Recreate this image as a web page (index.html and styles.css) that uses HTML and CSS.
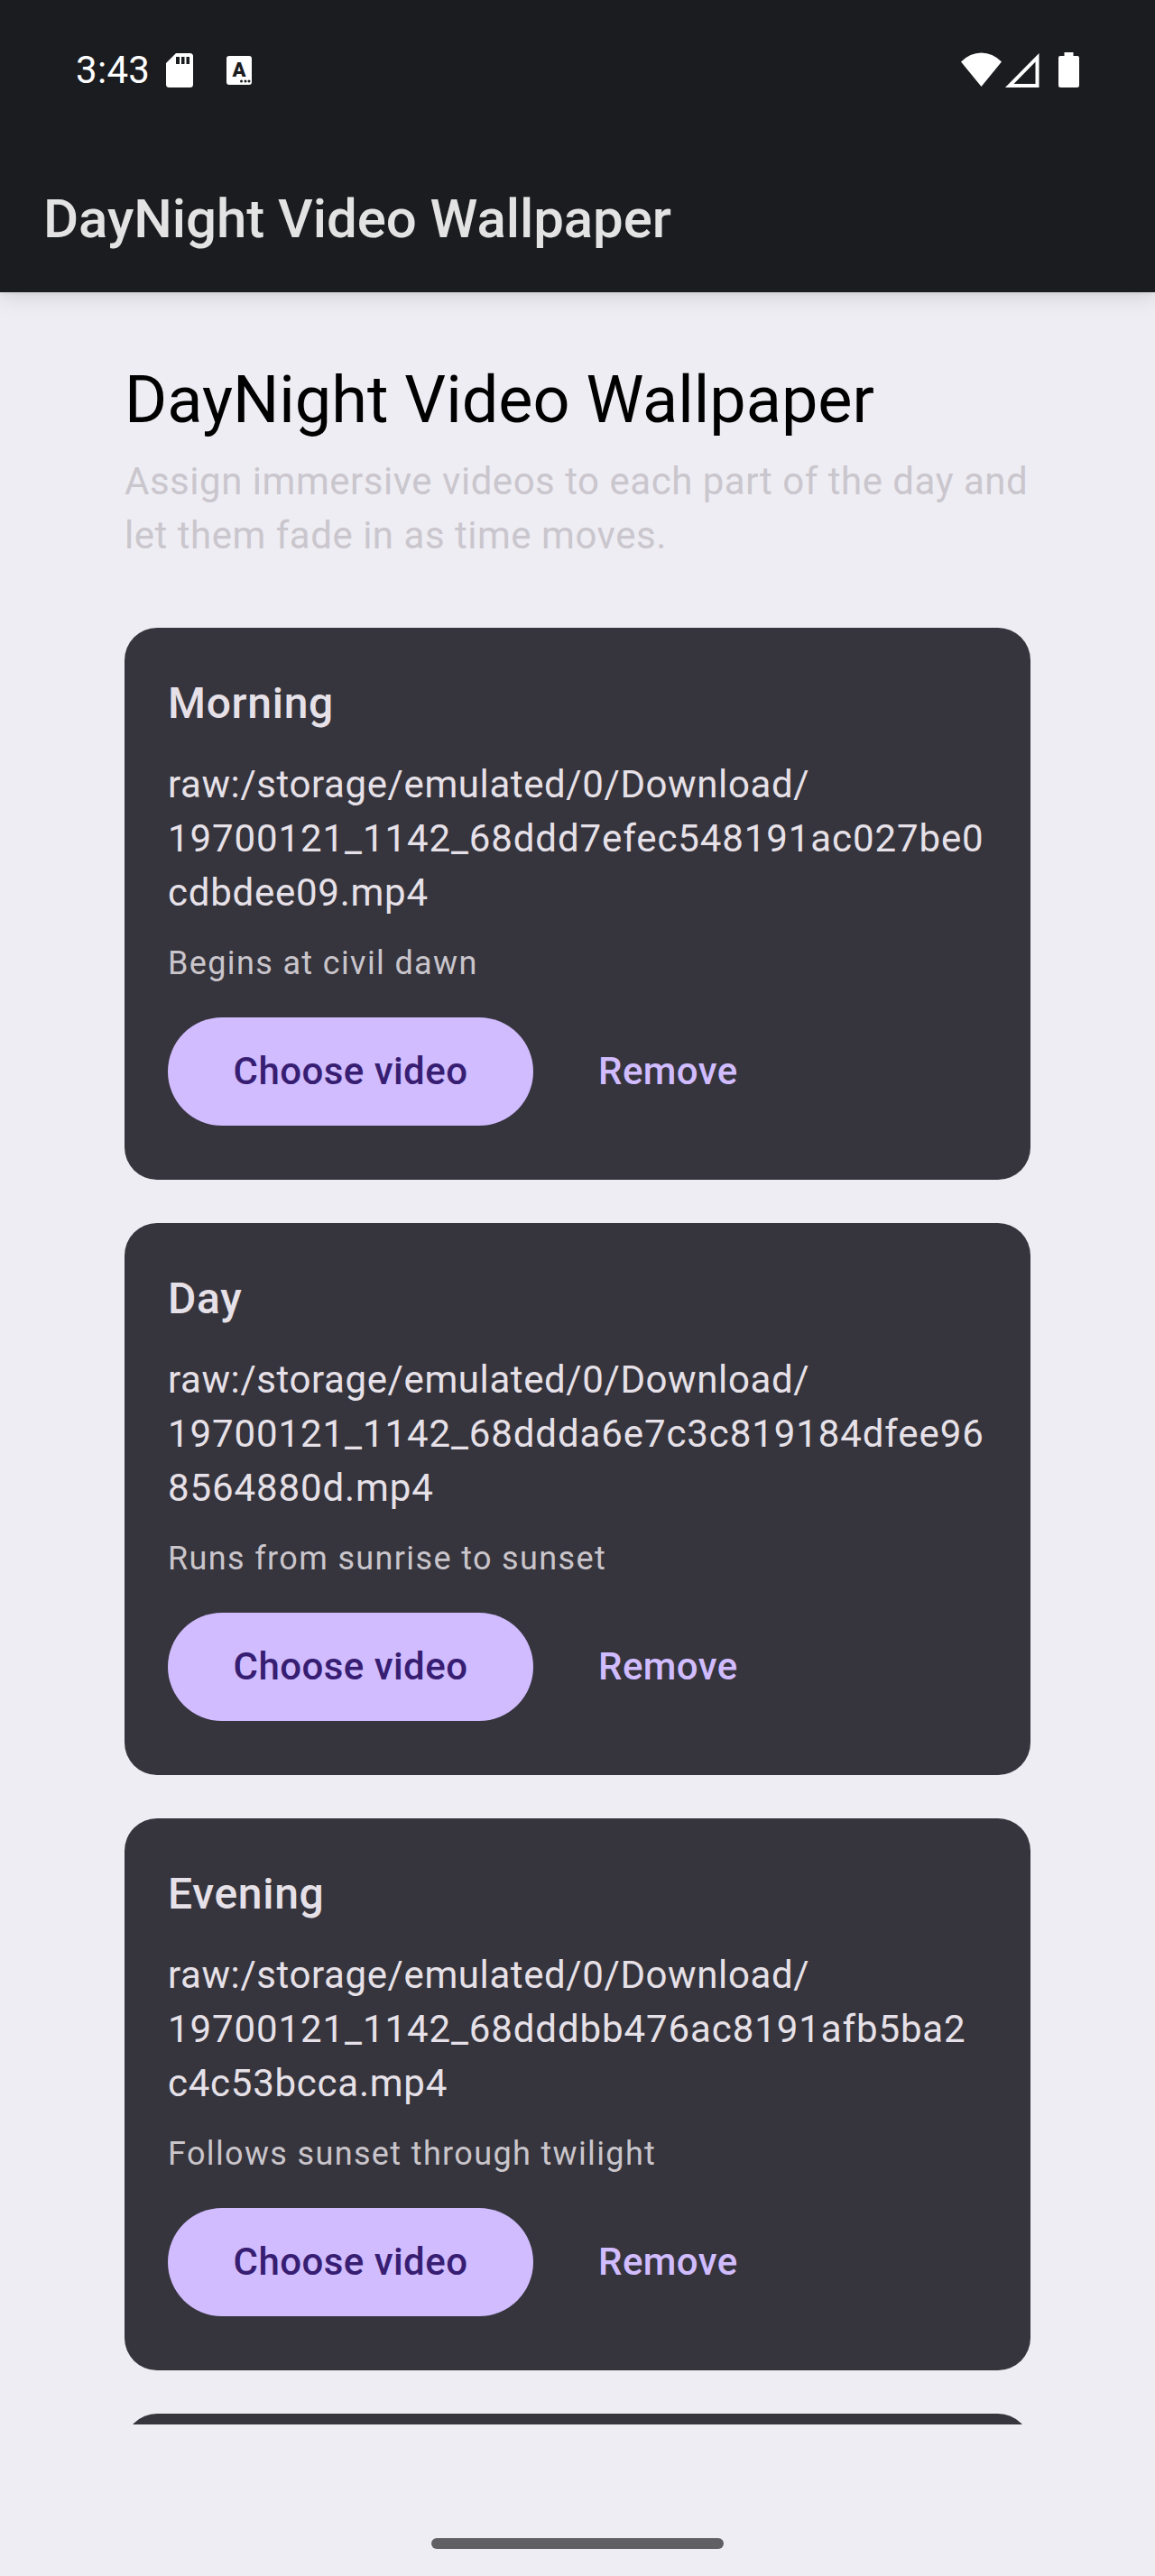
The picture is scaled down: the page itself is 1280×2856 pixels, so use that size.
FILE: index.html
```html
<!DOCTYPE html>
<html lang="en">
<head>
<meta charset="utf-8">
<title>DayNight Video Wallpaper</title>
<link rel="stylesheet" href="styles.css">
</head>
<body>
<div class="screen">
  <header class="top">
    <div class="status">
      <div class="status-left">
        <span class="clock">3:43</span>
        <svg class="sd" width="30" height="40" viewBox="0 0 30 40"><path fill="#fff" d="M11 1H26.500Q30 1 30 4.500V35.500Q30 39 26.500 39H3.500Q0 39 0 35.500V12Z"/><path fill="#1b1c1f" d="M11 5h4v8h-4zM17 5h3.500v8H17zM22.500 5H26v8h-3.500z"/></svg>
        <svg width="28" height="40" viewBox="0 0 28 40"><rect y="4" width="28" height="32" rx="3" fill="#fff"/><text class="glyph" x="14" y="27" text-anchor="middle">A</text><g fill="#1b1c1f"><circle cx="16.500" cy="32" r="1.500"/><circle cx="21" cy="32" r="1.500"/><circle cx="25" cy="32" r="1.500"/></g></svg>
      </div>
      <div class="status-right">
        <svg width="45" height="40" viewBox="0 0 45 40"><path fill="#fff" d="M0 10.500Q10 .5 22.500 .5T45 10.500L22.500 38Z"/></svg>
        <svg class="signal" width="38" height="40" viewBox="0 0 38 40"><path fill="#fff" fill-rule="evenodd" d="M37.500 1V39H0ZM33.500 10.500L9.500 35H33.500Z"/></svg>
        <svg class="battery" width="23" height="40" viewBox="0 0 23 40"><path fill="#fff" d="M6.500 0H16.500V4H21Q23 4 23 6V36.500Q23 39 20.500 39H2.500Q0 39 0 36.500V6Q0 4 2 4H6.500Z"/></svg>
      </div>
    </div>
    <div class="app-title">DayNight Video Wallpaper</div>
  </header>
  <main class="content">
    <h1 class="headline">DayNight Video Wallpaper</h1>
    <p class="intro">Assign immersive videos to each part of the day and<br>let them fade in as time moves.</p>
    <section class="card">
      <h2 class="card-title">Morning</h2>
      <p class="path"><span class="folder">raw:/storage/emulated/0/Download/</span><br><span class="file">19700121_1142_68ddd7efec548191ac027be0</span><br>cdbdee09.mp4</p>
      <p class="note">Begins at civil dawn</p>
      <div class="actions"><button class="choose">Choose video</button><button class="remove">Remove</button></div>
    </section>
    <section class="card">
      <h2 class="card-title">Day</h2>
      <p class="path"><span class="folder">raw:/storage/emulated/0/Download/</span><br><span class="file">19700121_1142_68ddda6e7c3c819184dfee96<br>8564880d.mp4</span></p>
      <p class="note">Runs from sunrise to sunset</p>
      <div class="actions"><button class="choose">Choose video</button><button class="remove">Remove</button></div>
    </section>
    <section class="card">
      <h2 class="card-title">Evening</h2>
      <p class="path"><span class="folder">raw:/storage/emulated/0/Download/</span><br><span class="file">19700121_1142_68dddbb476ac8191afb5ba2</span><br>c4c53bcca.mp4</p>
      <p class="note">Follows sunset through twilight</p>
      <div class="actions"><button class="choose">Choose video</button><button class="remove">Remove</button></div>
    </section>
    <section class="card"></section>
  </main>
  <footer class="nav"><div class="handle"></div></footer>
</div>
</body>
</html>
```
FILE: styles.css
```css
* { box-sizing: border-box; margin: 0; padding: 0; }
body { background: #eeedf3; font-family: Roboto, "Liberation Sans", sans-serif; }
.screen { width: 1280px; height: 2856px; display: flex; flex-direction: column; overflow: hidden; }

.top { flex: none; height: 324px; background: #1b1c1f; box-shadow: 0 2px 24px rgba(0, 0, 0, .15), 0 1px 4px rgba(0, 0, 0, .08); z-index: 1; }
.status { height: 156px; padding: 0 84px; display: flex; justify-content: space-between; align-items: center; }
.status-left, .status-right { display: flex; align-items: center; }
.status svg { display: block; flex: none; }
.clock { width: 82px; font-size: 42px; line-height: 60px; letter-spacing: .3px; color: #fff; white-space: nowrap; }
.sd { margin: 0 37px 0 18px; }
.signal { margin: 0 21px 0 4px; }
.glyph { font: 900 22px Roboto, sans-serif; fill: #1b1c1f; }
.app-title { height: 168px; padding-left: 48px; font-size: 60px; line-height: 174px; font-weight: 500; letter-spacing: -.06px; color: #e3e3e3; }

.content { flex: none; height: 2364px; padding: 72px 138px 0; overflow: hidden; }
.headline { font-size: 72px; line-height: 96px; font-weight: 400; color: #000; }
.intro { margin: 12px 0 72px; font-size: 42px; line-height: 60px; letter-spacing: .52px; color: #cac6cd; white-space: nowrap; }

.card { height: 612px; margin-bottom: 48px; padding: 48px; border-radius: 36px; background: #36343c; }
.card-title { font-size: 48px; line-height: 72px; font-weight: 500; letter-spacing: .7px; color: #e6e1e8; }
.path { margin-top: 24px; font-size: 42px; line-height: 60px; letter-spacing: .75px; color: #e6e1e8; white-space: nowrap; }
.folder { letter-spacing: .6px; }
.file { letter-spacing: .9px; }
.note { margin-top: 24px; font-size: 36px; line-height: 48px; letter-spacing: 1.36px; color: #c9c5cb; }
.actions { display: flex; gap: 24px; margin-top: 36px; }
.actions button { height: 120px; border: 0; border-radius: 60px; font: 500 42px/60px Roboto, sans-serif; letter-spacing: .45px; white-space: nowrap; }
.choose { width: 405px; background: #d0bcff; color: #381e72; }
.remove { padding: 0 48px; background: transparent; color: #d0bcff; }

.nav { flex: 1; display: flex; justify-content: center; padding-top: 126px; }
.handle { width: 324px; height: 12px; border-radius: 6px; background: #605f64; }
```
